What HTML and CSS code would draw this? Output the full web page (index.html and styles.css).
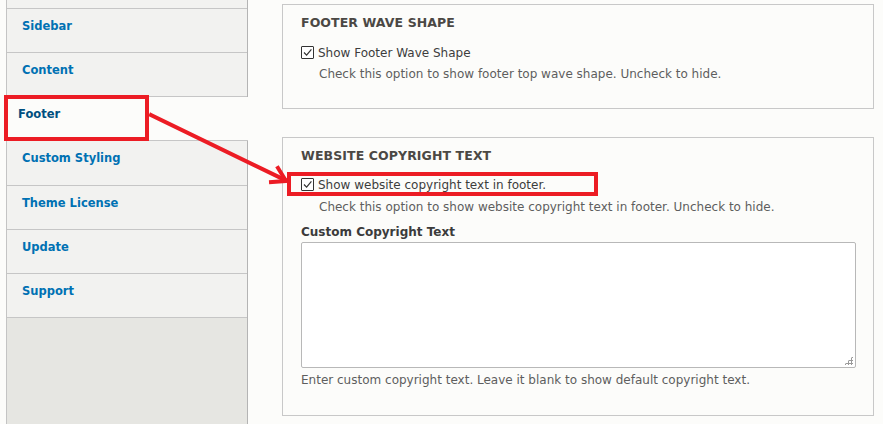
FILE: index.html
```html
<!DOCTYPE html>
<html>
<head>
<meta charset="utf-8">
<link rel="stylesheet" href="styles.css">
</head>
<body>
<div class="page">
  <aside class="sidebar">
    <ul class="tabs">
      <li class="tab tab-partial"></li>
      <li class="tab"><a>Sidebar</a></li>
      <li class="tab"><a>Content</a></li>
      <li class="tab active"><a>Footer</a></li>
      <li class="tab"><a>Custom Styling</a></li>
      <li class="tab"><a>Theme License</a></li>
      <li class="tab"><a>Update</a></li>
      <li class="tab"><a>Support</a></li>
    </ul>
  </aside>
  <main class="main">
    <section class="fieldset fs-wave">
      <h2 class="legend">FOOTER WAVE SHAPE</h2>
      <label class="check-row"><span class="checkbox"><svg viewBox="0 0 13 13" width="13" height="13"><path d="M3 6.5 L5.6 9.2 L10.4 3.4" fill="none" stroke="#333" stroke-width="1.2"/></svg></span>Show Footer Wave Shape</label>
      <p class="desc indent">Check this option to show footer top wave shape. Uncheck to hide.</p>
    </section>
    <section class="fieldset fs-copy">
      <h2 class="legend">WEBSITE COPYRIGHT TEXT</h2>
      <label class="check-row"><span class="checkbox"><svg viewBox="0 0 13 13" width="13" height="13"><path d="M3 6.5 L5.6 9.2 L10.4 3.4" fill="none" stroke="#333" stroke-width="1.2"/></svg></span>Show website copyright text in footer.</label>
      <p class="desc indent desc-copy">Check this option to show website copyright text in footer. Uncheck to hide.</p>
      <label class="field-label">Custom Copyright Text</label>
      <div class="textarea-wrap"><textarea class="textarea"></textarea><span class="grip"></span></div>
      <p class="desc desc-bottom">Enter custom copyright text. Leave it blank to show default copyright text.</p>
    </section>
  </main>
</div>
<div class="mark mark-tab"></div>
<div class="mark mark-check"></div>
<svg class="arrow" width="883" height="424" viewBox="0 0 883 424">
  <g stroke="#ec1c24" stroke-width="4" fill="none" stroke-linecap="square">
    <line x1="151" y1="115" x2="285" y2="180"/>
    <polyline points="278,168 286,181 271,182"/>
  </g>
</svg>
</body>
</html>
```
FILE: styles.css
```css
html, body {
  margin: 0;
  padding: 0;
  background: #fcfcfa;
  height: 424px;
  overflow: hidden;
}
body {
  font-family: "DejaVu Sans", "Liberation Sans", sans-serif;
  font-size: 12px;
  color: #3b3b3b;
  position: relative;
}
.page {
  display: flex;
  align-items: stretch;
  height: 424px;
}
.sidebar {
  width: 242px;
  padding-left: 6px;
  flex: none;
}
.tabs {
  list-style: none;
  margin: 0;
  padding: 0;
  height: 424px;
  box-sizing: border-box;
  background: #e6e6e2;
  border-left: 1px solid #c4c4c4;
  border-right: 1px solid #b4b4b4;
}
.tab {
  height: 43px;
  border-bottom: 1px solid #c6c6c6;
  background: #f2f2f0;
  box-sizing: content-box;
}
.tab-partial {
  height: 8px;
}
.tab:nth-child(5) {
  height: 44px;
}
.tab a {
  display: block;
  padding: 10px 0 0 15px;
  font-weight: bold;
  font-size: 11.5px;
  line-height: 14px;
  color: #0071b3;
}
.tab.active {
  background: #fcfcfa;
  margin-right: -1px;
}
.tab.active a {
  color: #004f80;
  padding-left: 11px;
}
.main {
  margin-left: 34px;
  width: 592px;
  padding-top: 4px;
}
.fieldset {
  border: 1px solid #c8c8c8;
  background: #fcfcfa;
  padding: 0 18px;
}
.fs-wave {
  height: 103px;
}
.fs-copy {
  margin-top: 28px;
  height: 277px;
}
.legend {
  margin: 0;
  padding-top: 10px;
  font-size: 12.5px;
  line-height: 16px;
  letter-spacing: 0.1px;
  color: #4b4844;
  font-weight: bold;
}
.check-row {
  display: flex;
  align-items: center;
  margin-top: 14px;
  height: 15px;
  color: #3d3d3d;
}
.fs-copy .check-row {
  margin-top: 13px;
}
.checkbox {
  width: 13px;
  height: 13px;
  margin-right: 4px;
  display: inline-block;
  box-sizing: border-box;
  border: 1px solid #333;
  border-radius: 1px;
  position: relative;
  background: #fff;
}
.checkbox svg {
  position: absolute;
  left: -1px;
  top: -1px;
}
.desc {
  margin: 6px 0 0;
  color: #5e5e5e;
  line-height: 16px;
}
.desc-copy {
  margin-top: 7px;
}
.indent {
  padding-left: 18px;
}
.field-label {
  display: block;
  margin-top: 9px;
  font-weight: bold;
  color: #3b3b3b;
  line-height: 16px;
}
.textarea-wrap {
  position: relative;
  margin-top: 2px;
  width: 555px;
  height: 126px;
}
.textarea {
  display: block;
  width: 555px;
  height: 126px;
  box-sizing: border-box;
  border: 1px solid #b8b8b8;
  border-radius: 2px;
  background: #fff;
  resize: none;
  margin: 0;
  padding: 4px;
}
.grip {
  position: absolute;
  right: 3px;
  bottom: 3px;
  width: 9px;
  height: 9px;
  background-image: radial-gradient(circle, #9a9a9a 1px, transparent 1.1px);
  background-size: 3px 3px;
  clip-path: polygon(100% 0, 100% 100%, 0 100%);
}
.desc-bottom {
  margin-top: 4px;
}
.mark {
  position: absolute;
  border: 4px solid #ec1c24;
  box-sizing: border-box;
}
.mark-tab {
  left: 4px;
  top: 95px;
  width: 145px;
  height: 46px;
}
.mark-check {
  left: 287px;
  top: 172px;
  width: 311px;
  height: 24px;
}
.arrow {
  position: absolute;
  left: 0;
  top: 0;
  pointer-events: none;
}
```
